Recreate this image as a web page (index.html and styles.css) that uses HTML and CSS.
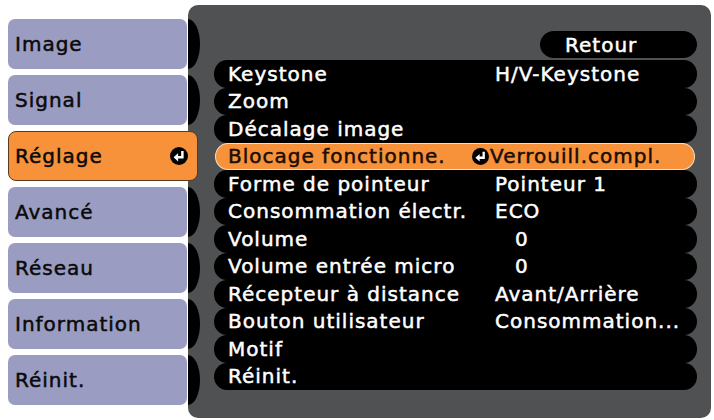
FILE: index.html
```html
<!DOCTYPE html>
<html lang="fr">
<head>
<meta charset="utf-8">
<title>Réglage</title>
<link rel="stylesheet" href="styles.css">
</head>
<body>
<div class="screen">
  <nav class="tabs">
    <div class="tab">Image</div>
    <div class="tab">Signal</div>
    <div class="tab sel">Réglage
      <svg class="enter" viewBox="0 0 16 16" width="18" height="18"><circle cx="8" cy="8" r="8" fill="#000"/><path d="M11 3.6V9.2H6.5" stroke="#fff" stroke-width="2.2" fill="none"/><path d="M3.2 9.2L7.2 5.6V12.8Z" fill="#fff"/></svg>
    </div>
    <div class="tab">Avancé</div>
    <div class="tab">Réseau</div>
    <div class="tab">Information</div>
    <div class="tab">Réinit.</div>
  </nav>
  <section class="panel">
    <div class="conns">
      <div class="conn"></div>
      <div class="conn"></div>
      <div class="conn hidden"></div>
      <div class="conn"></div>
      <div class="conn"></div>
      <div class="conn"></div>
      <div class="conn"></div>
    </div>
    <div class="content">
      <div class="retour">Retour</div>
      <div class="list">
        <div class="row"><span class="label">Keystone</span><span class="val">H/V-Keystone</span></div>
        <div class="row"><span class="label">Zoom</span></div>
        <div class="row"><span class="label">Décalage image</span></div>
        <div class="row sel"><span class="label">Blocage fonctionne.</span><span class="val icon"><svg class="enter" viewBox="0 0 16 16" width="17" height="17"><circle cx="8" cy="8" r="8" fill="#000"/><path d="M11 3.6V9.2H6.5" stroke="#fff" stroke-width="2.2" fill="none"/><path d="M3.2 9.2L7.2 5.6V12.8Z" fill="#fff"/></svg>Verrouill.compl.</span></div>
        <div class="row"><span class="label">Forme de pointeur</span><span class="val">Pointeur 1</span></div>
        <div class="row"><span class="label">Consommation électr.</span><span class="val">ECO</span></div>
        <div class="row"><span class="label">Volume</span><span class="val num">0</span></div>
        <div class="row"><span class="label">Volume entrée micro</span><span class="val num">0</span></div>
        <div class="row"><span class="label">Récepteur à distance</span><span class="val">Avant/Arrière</span></div>
        <div class="row"><span class="label">Bouton utilisateur</span><span class="val">Consommation...</span></div>
        <div class="row"><span class="label">Motif</span></div>
        <div class="row"><span class="label">Réinit.</span></div>
      </div>
    </div>
  </section>
</div>
</body>
</html>
```

FILE: styles.css
```css
html, body {
  margin: 0;
  padding: 0;
  background: #ffffff;
}
body {
  width: 714px;
  height: 420px;
  overflow: hidden;
  font-family: "DejaVu Sans", "Liberation Sans", sans-serif;
  font-size: 20px;
  letter-spacing: 1px;
  -webkit-text-stroke: 0.5px currentColor;
}
.screen {
  display: flex;
  align-items: flex-start;
  padding: 5px 0 0 8px;
}
.tabs {
  width: 180px;
  display: flex;
  flex-direction: column;
  gap: 6px;
  padding-top: 14px;
  position: relative;
  z-index: 2;
}
.tab {
  height: 50px;
  margin-right: 1px;
  box-sizing: border-box;
  background: #9a9cc2;
  border-radius: 7px;
  display: flex;
  align-items: center;
  padding-left: 7px;
  color: #0a0a0a;
}
.tab.sel {
  background: #f7923a;
  border: 1px solid #5a3a1c;
  margin-right: -10px;
  padding-left: 6px;
  padding-right: 9px;
  justify-content: space-between;
  border-radius: 8px;
}
.enter {
  display: block;
  flex: none;
}
.panel {
  width: 523px;
  height: 413px;
  background: #4f5153;
  border-radius: 10px;
  display: flex;
  align-items: flex-start;
}
.conns {
  width: 12px;
  display: flex;
  flex-direction: column;
  gap: 6px;
  padding-top: 14px;
}
.conn {
  height: 50px;
  background: #000;
  border-radius: 0 12px 12px 0 / 0 25px 25px 0;
}
.conn.hidden {
  visibility: hidden;
}
.content {
  flex: 1;
  display: flex;
  flex-direction: column;
  padding: 26px 14px 0 14px;
}
.retour {
  align-self: flex-end;
  width: 157px;
  height: 27px;
  box-sizing: border-box;
  background: #000;
  color: #fff;
  border-radius: 14px / 50%;
  padding-left: 25px;
  display: flex;
  align-items: center;
  margin-bottom: 2px;
}
.list {
  display: flex;
  flex-direction: column;
}
.row {
  height: 27.5px;
  box-sizing: border-box;
  background: #000;
  color: #fff;
  border-radius: 13px / 50%;
  display: flex;
  align-items: center;
  white-space: nowrap;
}
.label {
  width: 267px;
  padding-left: 14px;
  flex: none;
}
.val.num {
  padding-left: 20px;
}
.val.icon {
  display: flex;
  align-items: center;
  margin-left: -21px;
  gap: 1px;
}
.row.sel {
  background: #f7923a;
  color: #1a0d02;
  border: 1px solid #f9dcb8;
  margin: 0 2px 0 1px;
}
.row.sel .label {
  width: 265px;
  padding-left: 12px;
}
```
